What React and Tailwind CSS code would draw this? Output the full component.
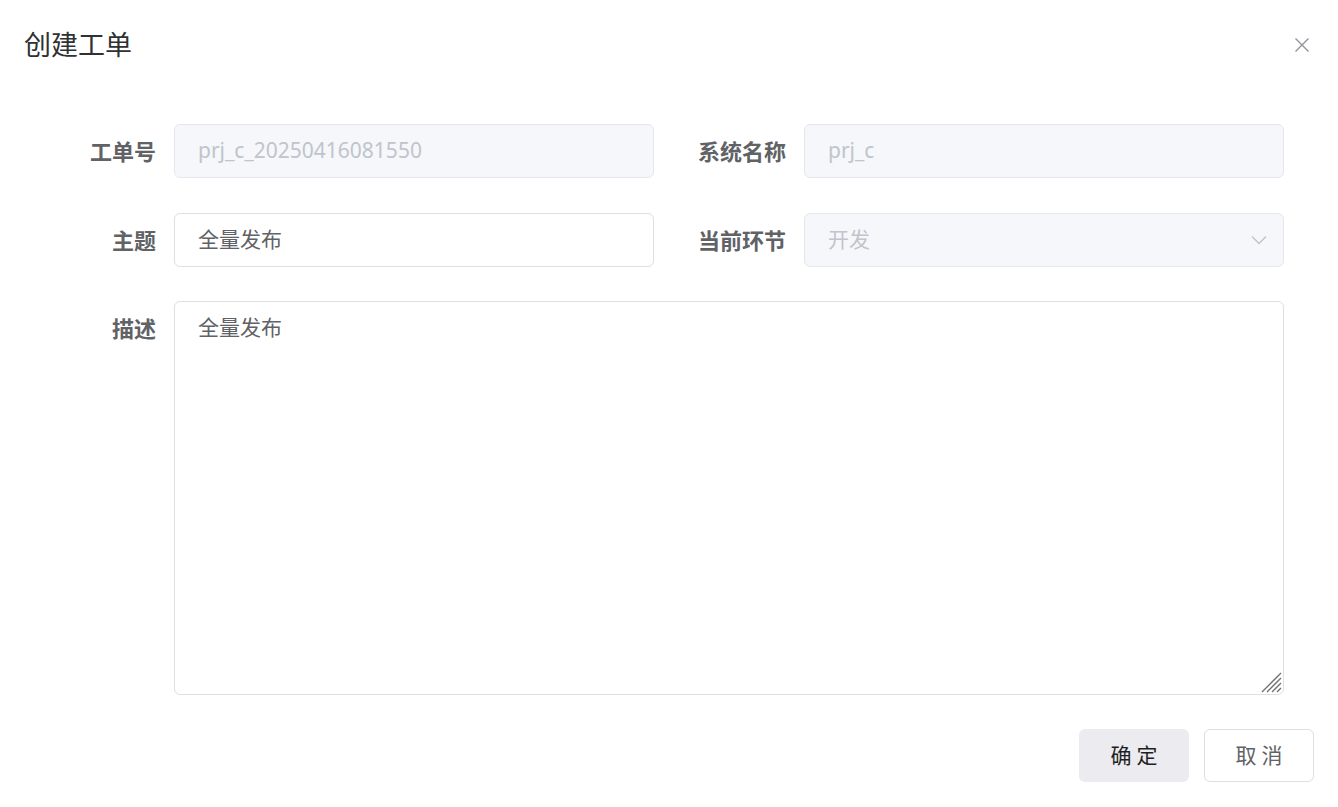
import React from "react";

const font = { fontFamily: '"Noto Sans", "Noto Sans CJK SC", sans-serif' };

function Label({ children, top }) {
  return (
    <div className={`w-[150px] shrink-0 text-right pr-[18px] text-[22px] font-bold text-[#606266] ${top ? "pt-[12px] leading-[30px]" : "leading-[54px]"}`}>
      {children}
    </div>
  );
}

export default function App() {
  return (
    <div className="w-[1338px] h-[807px] bg-white relative" style={font}>
      <div className="flex items-center justify-between pl-[24px] pr-[28px] pt-[26px]">
        <div className="text-[27px] leading-[38px] text-[#303133]">创建工单</div>
        <svg width="16" height="16" viewBox="0 0 16 16" className="text-[#909399]">
          <path d="M1.5 1.5 L14.5 14.5 M14.5 1.5 L1.5 14.5" stroke="currentColor" strokeWidth="1.4" fill="none" />
        </svg>
      </div>

      <div className="pt-[60px] pl-[24px] pr-[54px]">
        <div className="flex">
          <div className="flex w-[630px]">
            <Label>工单号</Label>
            <div className="w-[480px] h-[54px] rounded-[6px] border border-[#e4e7ed] bg-[#f5f7fa] pl-[23px] flex items-center text-[21px] text-[#c0c4cc]">
              prj_c_20250416081550
            </div>
          </div>
          <div className="flex">
            <Label>系统名称</Label>
            <div className="w-[480px] h-[54px] rounded-[6px] border border-[#e4e7ed] bg-[#f5f7fa] pl-[23px] flex items-center text-[21px] text-[#c0c4cc]">
              prj_c
            </div>
          </div>
        </div>

        <div className="flex mt-[35px]">
          <div className="flex w-[630px]">
            <Label>主题</Label>
            <div className="w-[480px] h-[54px] rounded-[6px] border border-[#dcdfe6] bg-white pl-[23px] flex items-center text-[21px] text-[#606266]">
              全量发布
            </div>
          </div>
          <div className="flex">
            <Label>当前环节</Label>
            <div className="w-[480px] h-[54px] rounded-[6px] border border-[#e4e7ed] bg-[#f5f7fa] pl-[23px] pr-[16px] flex items-center justify-between text-[21px] text-[#c0c4cc]">
              <span>开发</span>
              <svg width="16" height="10" viewBox="0 0 16 10" className="text-[#c0c4cc]">
                <path d="M1 1.5 L8 8.5 L15 1.5" stroke="currentColor" strokeWidth="1.4" fill="none" />
              </svg>
            </div>
          </div>
        </div>

        <div className="flex mt-[34px]">
          <Label top>描述</Label>
          <div className="relative w-[1110px] h-[394px] rounded-[6px] border border-[#dcdfe6] bg-white pl-[23px] pt-[10px] text-[21px] leading-[30px] text-[#606266]">
            全量发布
            <svg width="22" height="22" viewBox="0 0 22 22" className="absolute right-[1px] bottom-[1px] text-[#707070]">
              <path d="M21 2 L2 21 M21 7 L7 21 M21 12 L12 21 M21 17 L17 21" stroke="currentColor" strokeWidth="1.4" fill="none" />
            </svg>
          </div>
        </div>
      </div>

      <div className="flex justify-end gap-[15px] pr-[24px] mt-[34px]">
        <button className="w-[110px] h-[53px] rounded-[6px] bg-[#ebebf0] text-[21px] text-[#1f1f1f] tracking-[5px] pl-[5px]">确定</button>
        <button className="w-[110px] h-[53px] rounded-[6px] border border-[#dcdfe6] bg-white text-[21px] text-[#606266] tracking-[5px] pl-[5px]">取消</button>
      </div>
    </div>
  );
}
